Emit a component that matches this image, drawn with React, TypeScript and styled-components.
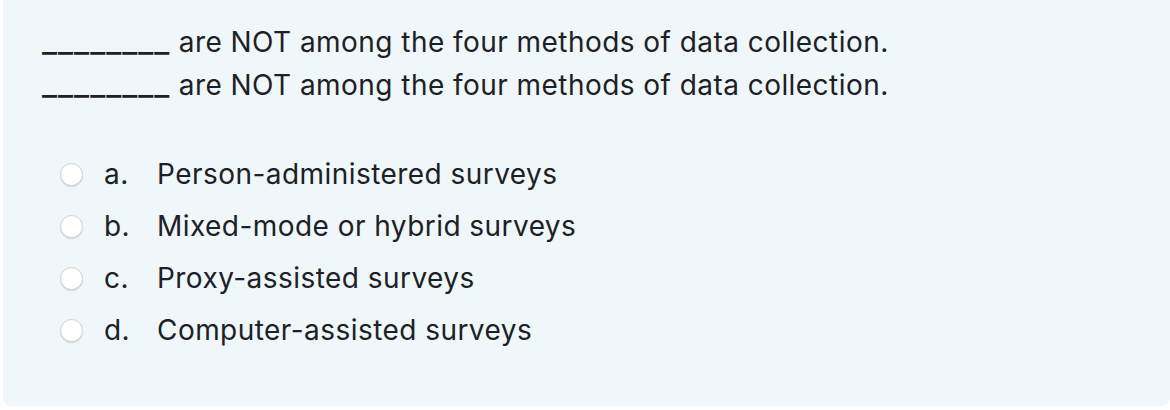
import React from 'react';
import styled, { createGlobalStyle } from 'styled-components';

const GlobalStyle = createGlobalStyle`
  body {
    margin: 0;
    background: #ffffff;
    font-family: Inter, "Noto Sans", sans-serif;
    color: #1d2125;
  }
`;

const options = [
  { letter: 'a.', text: 'Person-administered surveys' },
  { letter: 'b.', text: 'Mixed-mode or hybrid surveys' },
  { letter: 'c.', text: 'Proxy-assisted surveys' },
  { letter: 'd.', text: 'Computer-assisted surveys' },
];

export default function App() {
  return (
    <>
      <GlobalStyle />
      <Panel>
        <Question>
          <QLine><Blank>________</Blank> are NOT among the four methods of data collection.</QLine>
          <QLine><Blank>________</Blank> are NOT among the four methods of data collection.</QLine>
        </Question>
        <Answers>
          {options.map((o) => (
            <Option key={o.letter}>
              <Radio type="radio" name="answer" />
              <Letter>{o.letter}</Letter>
              <Label>{o.text}</Label>
            </Option>
          ))}
        </Answers>
      </Panel>
    </>
  );
}

const Panel = styled.div`
  margin-left: 3px;
  height: 406px;
  box-sizing: border-box;
  background-color: #eff7fb;
  border-radius: 0 0 8px 8px;
  padding: 21px 0 0 39px;
  letter-spacing: 0.45px;
`;

const Question = styled.div`
  font-size: 28px;
  line-height: 43px;
`;

const QLine = styled.div`
  white-space: nowrap;
`;

const Blank = styled.span`
  font-size: 33px;
  line-height: 1;
  letter-spacing: 1px;
`;

const Answers = styled.div`
  display: flex;
  flex-direction: column;
  margin-top: 41px;
  padding-left: 18px;
`;

const Option = styled.label`
  display: flex;
  align-items: center;
  height: 52px;
  font-size: 28px;
`;

const Radio = styled.input`
  appearance: none;
  flex: none;
  width: 23px;
  height: 23px;
  margin: 0;
  border-radius: 50%;
  background: #ffffff;
  border: 1px solid #cfd3d6;
  box-shadow: 0 1px 1px rgba(0, 0, 0, 0.12);
  box-sizing: border-box;
`;

const Letter = styled.span`
  width: 53px;
  margin-left: 21px;
`;

const Label = styled.span``;
